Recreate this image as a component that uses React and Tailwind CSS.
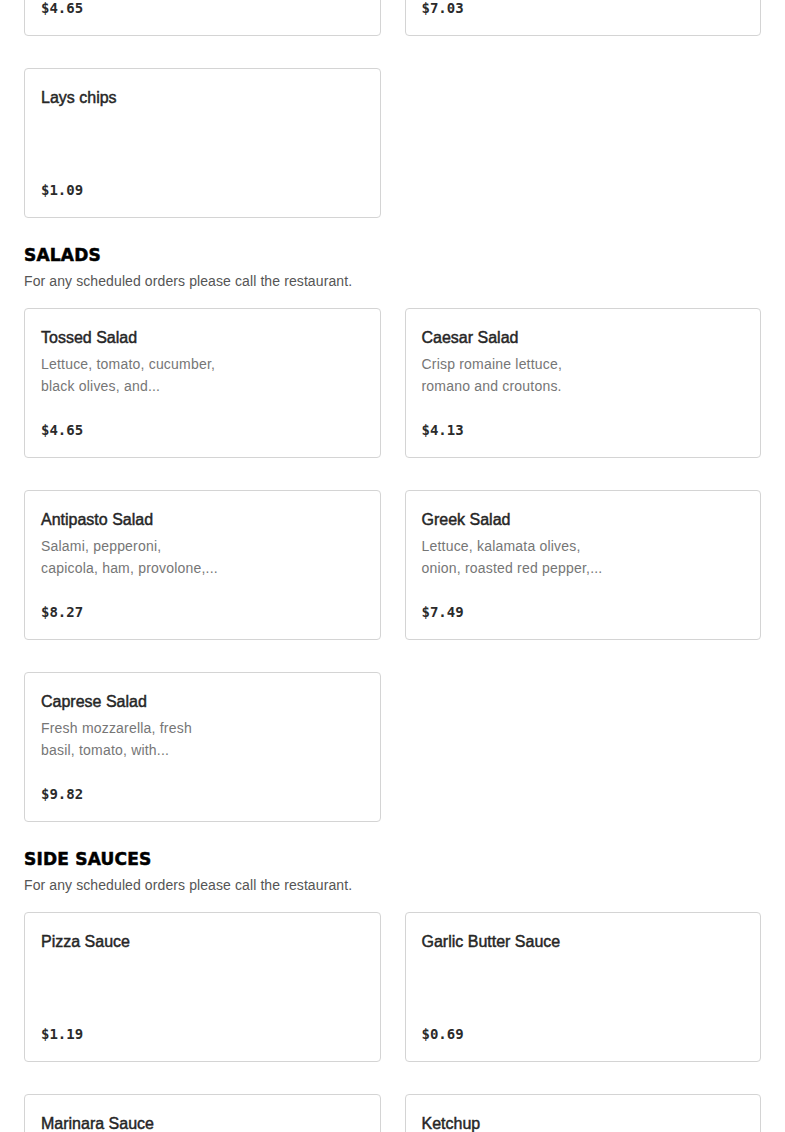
import React from 'react'

const sections = [
  {
    id: 'sides',
    title: null,
    items: [
      { name: 'Garlic Knots', desc: '', price: '$4.65' },
      { name: 'Mozzarella Sticks', desc: '', price: '$7.03' },
      { name: 'Lays chips', desc: '', price: '$1.09' },
    ],
  },
  {
    id: 'salads',
    title: 'SALADS',
    items: [
      { name: 'Tossed Salad', desc: ['Lettuce, tomato, cucumber,', 'black olives, and...'], price: '$4.65' },
      { name: 'Caesar Salad', desc: ['Crisp romaine lettuce,', 'romano and croutons.'], price: '$4.13' },
      { name: 'Antipasto Salad', desc: ['Salami, pepperoni,', 'capicola, ham, provolone,...'], price: '$8.27' },
      { name: 'Greek Salad', desc: ['Lettuce, kalamata olives,', 'onion, roasted red pepper,...'], price: '$7.49' },
      { name: 'Caprese Salad', desc: ['Fresh mozzarella, fresh', 'basil, tomato, with...'], price: '$9.82' },
    ],
  },
  {
    id: 'sauces',
    title: 'SIDE SAUCES',
    items: [
      { name: 'Pizza Sauce', desc: '', price: '$1.19' },
      { name: 'Garlic Butter Sauce', desc: '', price: '$0.69' },
      { name: 'Marinara Sauce', desc: '', price: '$1.19' },
      { name: 'Ketchup', desc: '', price: '$0.50' },
    ],
  },
]

const MenuCard = ({ item }) => (
  <div className="h-[150px] flex flex-col justify-between px-4 pt-[17px] pb-[15px] bg-white border border-[#d4d4d4] rounded-[4px]">
    <div>
      <h3 className="text-[16px] leading-6 text-[#262626] font-['Liberation_Sans',Arial,sans-serif] [-webkit-text-stroke:0.45px_#262626]">
        {item.name}
      </h3>
      {item.desc && (
        <p className="mt-[3px] text-[14px] leading-[22px] text-[#767676] tracking-[0.2px] font-['Liberation_Sans',Arial,sans-serif]">
          {item.desc.map((line) => (
            <span key={line} className="block">{line}</span>
          ))}
        </p>
      )}
    </div>
    <div className="text-[14px] leading-6 font-bold text-[#2b2b2b] font-['DejaVu_Sans_Mono',monospace]">
      {item.price}
    </div>
  </div>
)

export default function App() {
  return (
    <div className="min-h-screen bg-white overflow-hidden">
      <div className="px-6 -mt-[114px] pb-10">
        {sections.map((section, i) => (
          <div key={section.id} className={i > 0 ? 'mt-6' : ''}>
            {section.title && (
              <>
                <h2 className="pt-px text-[17px] leading-6 font-bold text-black tracking-[0.2px] font-['DejaVu_Sans',sans-serif] [-webkit-text-stroke:0.5px_#000]">
                  {section.title}
                </h2>
                <p className="mt-1 text-[14px] leading-5 text-[#555555] tracking-[0.1px] font-['Liberation_Sans',Arial,sans-serif]">
                  For any scheduled orders please call the restaurant.
                </p>
              </>
            )}
            <div className={`grid grid-cols-2 gap-x-6 gap-y-8 ${section.title ? 'mt-[17px]' : ''}`}>
              {section.items.map((item) => (
                <MenuCard key={item.name} item={item} />
              ))}
            </div>
          </div>
        ))}
      </div>
    </div>
  )
}
